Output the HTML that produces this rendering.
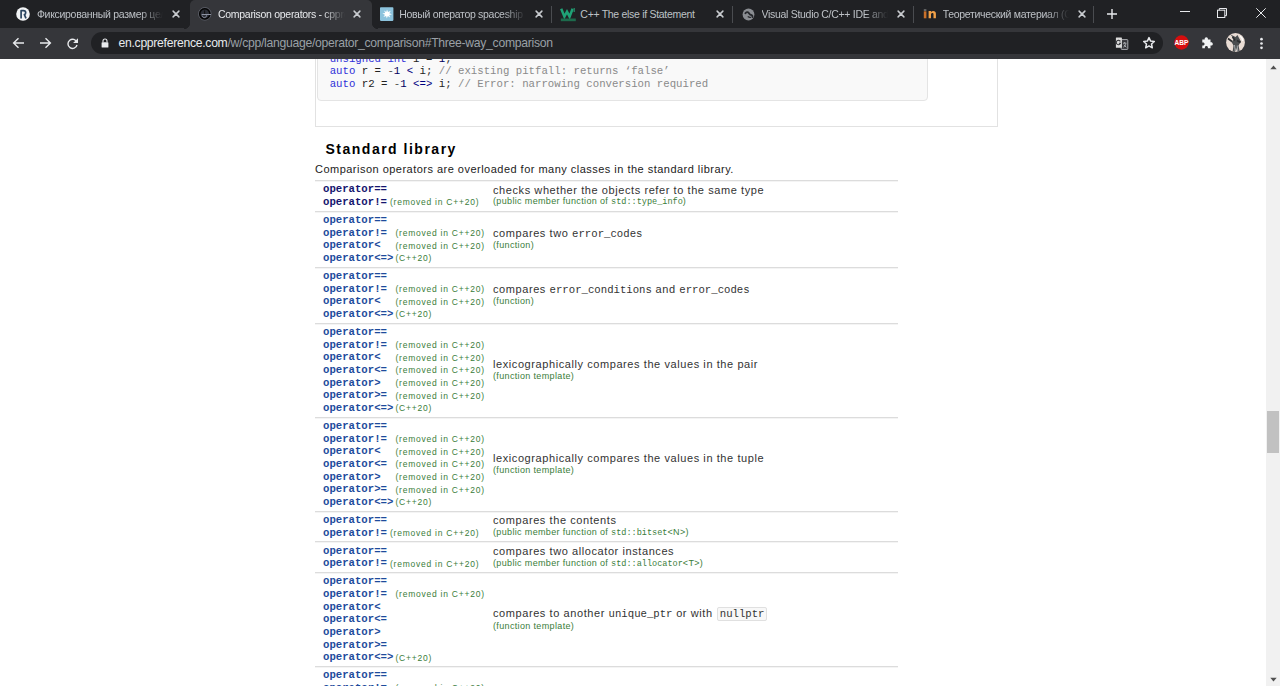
<!DOCTYPE html>
<html><head><meta charset="utf-8"><title>cppreference</title>
<style>
*{box-sizing:border-box}
html,body{margin:0;padding:0}
body{width:1280px;height:686px;overflow:hidden;position:relative;background:#fff;font-family:"Liberation Sans",sans-serif}
.abs{position:absolute}
.ttl{position:absolute;top:7.96px;font-size:10.5px;letter-spacing:-0.3px;line-height:12px;white-space:nowrap;overflow:hidden}
.ttl.fade{-webkit-mask-image:linear-gradient(to right,#000 82%,transparent 100%);mask-image:linear-gradient(to right,#000 82%,transparent 100%)}
.cls{position:absolute;top:10px;width:8px;height:8px;line-height:0}
.cls svg,.favi svg{display:block}
.favi{position:absolute;line-height:0}
.sep{position:absolute;top:6px;width:1px;height:16.5px;background:#4a4c50}
.code{position:absolute;left:329.7px;font-family:"Liberation Mono",monospace;font-size:10.7px;line-height:12.8px;white-space:pre;color:#222}
.kw{color:#3030d8}.sy1{color:#000080}.sy2{color:#505050}.sy4{color:#303030}.nu{color:#000060}.co{color:#8a8a8a}.eq{color:#222}
.hl{position:absolute;left:315px;width:583.4px;height:2px;border-top:1px solid #dcdcdc;border-bottom:1px solid #f4f4f4}
.ops{position:absolute;left:323px;font-family:"Liberation Mono",monospace;font-weight:bold;font-size:10.67px;line-height:12.667px;white-space:pre}
.mk{position:absolute;font-family:"Liberation Sans",sans-serif;font-size:8.5px;line-height:12.667px;color:#3a7d3a;letter-spacing:0.76px;white-space:pre}
.desc{position:absolute;left:493px;white-space:pre;color:#222}
.d1{font-size:11px;letter-spacing:0.58px;line-height:13px;color:#333}
.d2{font-size:9px;letter-spacing:0.35px;line-height:11px;color:#3a7d3a}
.dm{font-family:"Liberation Mono",monospace;letter-spacing:0;font-size:10.67px}
.m2{font-family:"Liberation Mono",monospace;letter-spacing:0;font-size:8.55px}
.nul{font-family:"Liberation Mono",monospace;letter-spacing:0;font-size:10.67px;background:#f8f8f8;border:1px solid #e0e0e0;border-radius:2px;padding:0 1.5px;margin-left:1px}
</style></head>
<body>
<div class="abs" style="left:315px;top:20px;width:682.5px;height:107px;border:1px solid #e2e2e2;border-top:none"></div>
<div class="abs" style="left:317.4px;top:20px;width:610.2px;height:80.6px;background:#f9f9f9;border:1px solid #e4e4e4;border-radius:4px"></div>
<div class="code" style="top:52.86px"><span class="kw">unsigned</span> <span class="kw">int</span> i <span class="eq">=</span> <span class="nu">1</span><span class="sy4">;</span></div>
<div class="code" style="top:65.06px"><span class="kw">auto</span> r <span class="eq">=</span> <span class="sy2">-</span><span class="nu">1</span> <span class="sy1">&lt;</span> i<span class="sy4">;</span> <span class="co">// existing pitfall: returns ‘false’</span></div>
<div class="code" style="top:77.96px"><span class="kw">auto</span> r2 <span class="eq">=</span> <span class="sy2">-</span><span class="nu">1</span> <span class="sy1">&lt;=&gt;</span> i<span class="sy4">;</span> <span class="co">// Error: narrowing conversion required</span></div>
<div class="abs" style="left:325.5px;top:141.15px;font-weight:bold;font-size:14px;line-height:16px;letter-spacing:1.5px;color:#000;white-space:pre">Standard library</div>
<div class="abs" style="left:315px;top:162.69px;font-size:11px;line-height:13px;letter-spacing:0.48px;color:#222;white-space:pre">Comparison operators are overloaded for many classes in the standard library.</div>
<div class="hl" style="top:180px"></div>
<div class="ops" style="top:183.32px;color:#14146e">operator==</div>
<div class="ops" style="top:195.99px;color:#14146e">operator!=</div>
<div class="mk" style="left:390px;top:196.39px">(removed in C++20)</div>
<div class="desc d1" style="top:183.59px">checks whether the objects refer to the same type</div>
<div class="desc d2" style="top:196.18px">(public member function of <span class="m2">std::type_info</span>)</div>
<div class="hl" style="top:211px"></div>
<div class="ops" style="top:213.99px;color:#1d4b9c">operator==</div>
<div class="ops" style="top:226.66px;color:#1d4b9c">operator!=</div>
<div class="mk" style="left:395.5px;top:227.06px">(removed in C++20)</div>
<div class="ops" style="top:239.32px;color:#1d4b9c">operator&lt;</div>
<div class="mk" style="left:395.5px;top:239.72px">(removed in C++20)</div>
<div class="ops" style="top:251.99px;color:#1d4b9c">operator&lt;=&gt;</div>
<div class="mk" style="left:395.5px;top:252.39px">(C++20)</div>
<div class="desc d1" style="top:226.92px">compares two <span class="dm">error_codes</span></div>
<div class="desc d2" style="top:239.52px">(function)</div>
<div class="hl" style="top:267px"></div>
<div class="ops" style="top:269.99px;color:#1d4b9c">operator==</div>
<div class="ops" style="top:282.66px;color:#1d4b9c">operator!=</div>
<div class="mk" style="left:395.5px;top:283.06px">(removed in C++20)</div>
<div class="ops" style="top:295.32px;color:#1d4b9c">operator&lt;</div>
<div class="mk" style="left:395.5px;top:295.72px">(removed in C++20)</div>
<div class="ops" style="top:307.99px;color:#1d4b9c">operator&lt;=&gt;</div>
<div class="mk" style="left:395.5px;top:308.39px">(C++20)</div>
<div class="desc d1" style="top:282.92px">compares <span class="dm">error_conditions</span> and <span class="dm">error_codes</span></div>
<div class="desc d2" style="top:295.52px">(function)</div>
<div class="hl" style="top:323px"></div>
<div class="ops" style="top:325.99px;color:#1d4b9c">operator==</div>
<div class="ops" style="top:338.66px;color:#1d4b9c">operator!=</div>
<div class="mk" style="left:395.5px;top:339.06px">(removed in C++20)</div>
<div class="ops" style="top:351.33px;color:#1d4b9c">operator&lt;</div>
<div class="mk" style="left:395.5px;top:351.72px">(removed in C++20)</div>
<div class="ops" style="top:363.99px;color:#1d4b9c">operator&lt;=</div>
<div class="mk" style="left:395.5px;top:364.39px">(removed in C++20)</div>
<div class="ops" style="top:376.66px;color:#1d4b9c">operator&gt;</div>
<div class="mk" style="left:395.5px;top:377.06px">(removed in C++20)</div>
<div class="ops" style="top:389.33px;color:#1d4b9c">operator&gt;=</div>
<div class="mk" style="left:395.5px;top:389.73px">(removed in C++20)</div>
<div class="ops" style="top:401.99px;color:#1d4b9c">operator&lt;=&gt;</div>
<div class="mk" style="left:395.5px;top:402.39px">(C++20)</div>
<div class="desc d1" style="top:357.92px">lexicographically compares the values in the pair</div>
<div class="desc d2" style="top:370.52px">(function template)</div>
<div class="hl" style="top:417px"></div>
<div class="ops" style="top:419.99px;color:#1d4b9c">operator==</div>
<div class="ops" style="top:432.66px;color:#1d4b9c">operator!=</div>
<div class="mk" style="left:395.5px;top:433.06px">(removed in C++20)</div>
<div class="ops" style="top:445.33px;color:#1d4b9c">operator&lt;</div>
<div class="mk" style="left:395.5px;top:445.73px">(removed in C++20)</div>
<div class="ops" style="top:457.99px;color:#1d4b9c">operator&lt;=</div>
<div class="mk" style="left:395.5px;top:458.39px">(removed in C++20)</div>
<div class="ops" style="top:470.66px;color:#1d4b9c">operator&gt;</div>
<div class="mk" style="left:395.5px;top:471.06px">(removed in C++20)</div>
<div class="ops" style="top:483.33px;color:#1d4b9c">operator&gt;=</div>
<div class="mk" style="left:395.5px;top:483.73px">(removed in C++20)</div>
<div class="ops" style="top:496.00px;color:#1d4b9c">operator&lt;=&gt;</div>
<div class="mk" style="left:395.5px;top:496.39px">(C++20)</div>
<div class="desc d1" style="top:451.93px">lexicographically compares the values in the tuple</div>
<div class="desc d2" style="top:464.52px">(function template)</div>
<div class="hl" style="top:511px"></div>
<div class="ops" style="top:514.00px;color:#1d4b9c">operator==</div>
<div class="ops" style="top:526.66px;color:#1d4b9c">operator!=</div>
<div class="mk" style="left:390px;top:527.06px">(removed in C++20)</div>
<div class="desc d1" style="top:514.26px">compares the contents</div>
<div class="desc d2" style="top:526.85px">(public member function of <span class="m2">std::bitset</span>&lt;N&gt;)</div>
<div class="hl" style="top:541px"></div>
<div class="ops" style="top:544.66px;color:#1d4b9c">operator==</div>
<div class="ops" style="top:557.33px;color:#1d4b9c">operator!=</div>
<div class="mk" style="left:390px;top:557.73px">(removed in C++20)</div>
<div class="desc d1" style="top:544.93px">compares two allocator instances</div>
<div class="desc d2" style="top:557.52px">(public member function of <span class="m2">std::allocator</span>&lt;T&gt;)</div>
<div class="hl" style="top:572px"></div>
<div class="ops" style="top:575.33px;color:#1d4b9c">operator==</div>
<div class="ops" style="top:588.00px;color:#1d4b9c">operator!=</div>
<div class="mk" style="left:395.5px;top:588.40px">(removed in C++20)</div>
<div class="ops" style="top:600.66px;color:#1d4b9c">operator&lt;</div>
<div class="ops" style="top:613.33px;color:#1d4b9c">operator&lt;=</div>
<div class="ops" style="top:626.00px;color:#1d4b9c">operator&gt;</div>
<div class="ops" style="top:638.66px;color:#1d4b9c">operator&gt;=</div>
<div class="ops" style="top:651.33px;color:#1d4b9c">operator&lt;=&gt;</div>
<div class="mk" style="left:395.5px;top:651.73px">(C++20)</div>
<div class="desc d1" style="top:607.26px">compares to another <span class="dm">unique_ptr</span> or with <span class="nul">nullptr</span></div>
<div class="desc d2" style="top:621.36px">(function template)</div>
<div class="hl" style="top:666px"></div>
<div class="ops" style="top:669.33px;color:#1d4b9c">operator==</div>
<div class="ops" style="top:682.00px;color:#1d4b9c">operator!=</div>
<div class="mk" style="left:395.5px;top:682.40px">(removed in C++20)</div>

<div class="abs" style="left:1266px;top:58.5px;width:14px;height:627.5px;background:#f1f1f1"></div>
<div class="abs" style="left:1267px;top:410.6px;width:11.8px;height:42.3px;background:#c1c1c1"></div>
<svg class="abs" style="left:1268.5px;top:64px" width="9" height="6" viewBox="0 0 9 6"><path d="M1.3 5.3L4.5 1.6 7.7 5.3z" fill="#505050"/></svg>
<svg class="abs" style="left:1268.5px;top:676.5px" width="9" height="6" viewBox="0 0 9 6"><path d="M1.3 0.8L4.5 4.5 7.7 0.8z" fill="#505050"/></svg>

<div class="abs" style="left:0;top:0;width:1280px;height:28px;background:#202124"></div>
<div class="abs" style="left:0;top:28px;width:1280px;height:30.5px;background:#35363a"></div>
<div class="abs" style="left:189.5px;top:0px;width:182px;height:28.5px;background:#35363a;border-radius:5px 5px 0 0"></div>
<div class="abs" style="left:183.5px;top:22.5px;width:6px;height:6px;background:radial-gradient(circle at 0 0,#202124 5.9px,#35363a 6.3px)"></div>
<div class="abs" style="left:371.5px;top:22.5px;width:6px;height:6px;background:radial-gradient(circle at 100% 0,#202124 5.9px,#35363a 6.3px)"></div>
<div class="ttl fade" style="left:36.90px;width:126.50px;color:#bdc1c6">Фиксированный размер целого</div>
<div class="cls" style="left:172.30px;top:9.8px"><svg width="8" height="8" viewBox="0 0 8 8"><path d="M1.1 1.1L6.9 6.9M6.9 1.1L1.1 6.9" stroke="#c8cbcf" stroke-width="1.5" stroke-linecap="round"/></svg></div>
<div class="favi" style="left:17.40px;top:8px"><svg style="margin-left:-1.4px;margin-top:-1.1px" width="14" height="14" viewBox="0 0 14 14"><circle cx="7" cy="7" r="6.8" fill="#f2f4f6"/><path d="M5.1 11.4V3.6h2.3c1.5 0 2.3.8 2.3 2.1 0 1-.5 1.7-1.3 1.9l1.6 3.8" stroke="#2b4560" stroke-width="1.7" fill="none" stroke-linejoin="round"/></svg></div>
<div class="ttl fade" style="left:218.05px;width:126.50px;color:#e8eaed">Comparison operators - cppreference.com</div>
<div class="cls" style="left:353.45px;top:9.8px"><svg width="8" height="8" viewBox="0 0 8 8"><path d="M1.1 1.1L6.9 6.9M6.9 1.1L1.1 6.9" stroke="#c8cbcf" stroke-width="1.5" stroke-linecap="round"/></svg></div>
<div class="favi" style="left:198.55px;top:8px"><svg style="margin-left:-1px;margin-top:-0.6px" width="14" height="14" viewBox="0 0 14 14"><circle cx="6.8" cy="6.8" r="6.3" fill="none" stroke="#5d616b" stroke-width="0.9"/><circle cx="6.8" cy="6.8" r="5.1" fill="#2b2e36" stroke="#050505" stroke-width="1.5"/><path d="M3.6 7.5h9.4" stroke="#8d93a3" stroke-width="1"/><path d="M4.2 8.6c.3 1.3 1.2 2 2.3 2s1.9-.9 2-2.2" stroke="#8d93a3" stroke-width="1" fill="none"/><path d="M6.6 3.4v3.6" stroke="#111" stroke-width="1"/></svg></div>
<div class="ttl fade" style="left:399.20px;width:126.50px;color:#bdc1c6">Новый оператор spaceship (космический корабль)</div>
<div class="cls" style="left:534.60px;top:9.8px"><svg width="8" height="8" viewBox="0 0 8 8"><path d="M1.1 1.1L6.9 6.9M6.9 1.1L1.1 6.9" stroke="#c8cbcf" stroke-width="1.5" stroke-linecap="round"/></svg></div>
<div class="favi" style="left:379.70px;top:8px"><svg style="margin-left:0px;margin-top:-1px" width="14" height="14" viewBox="0 0 14 14"><rect x="0" y="0.2" width="13.4" height="13.7" rx="0.8" fill="#8cc3dd"/><path d="M7 2.6L8 5 10.8 3.8 9.3 6.2 12 7.2 9.2 7.9 10.2 10.6 7.8 9.1 6.8 11.6 6.1 9 3.4 10 5 7.7 2.3 6.6 5.2 6 4.1 3.4 6.3 5z" fill="#fff"/><circle cx="7" cy="7" r="2.2" fill="#fff"/></svg></div>
<div class="ttl" style="left:580.35px;width:126.50px;color:#bdc1c6">C++ The else if Statement</div>
<div class="cls" style="left:715.75px;top:9.8px"><svg width="8" height="8" viewBox="0 0 8 8"><path d="M1.1 1.1L6.9 6.9M6.9 1.1L1.1 6.9" stroke="#c8cbcf" stroke-width="1.5" stroke-linecap="round"/></svg></div>
<div class="favi" style="left:560.85px;top:8px"><svg style="margin-left:-1.2px;margin-top:-0.5px" width="17" height="14" viewBox="0 0 17 14"><path d="M1.2 0.8L4.4 8.6 7 3.6 9.6 8.6 12.6 0.8" stroke="#1fa276" stroke-width="2.5" fill="none" stroke-linejoin="miter"/><rect x="13.4" y="0" width="1.6" height="4" fill="#247a5c"/><rect x="0.8" y="10.5" width="15" height="2.7" fill="#1d6a4c"/></svg></div>
<div class="ttl fade" style="left:761.50px;width:126.50px;color:#bdc1c6">Visual Studio C/C++ IDE and Compiler for Windows</div>
<div class="cls" style="left:896.90px;top:9.8px"><svg width="8" height="8" viewBox="0 0 8 8"><path d="M1.1 1.1L6.9 6.9M6.9 1.1L1.1 6.9" stroke="#c8cbcf" stroke-width="1.5" stroke-linecap="round"/></svg></div>
<div class="favi" style="left:742.00px;top:8px"><svg style="margin-left:-0.3px;margin-top:-0.1px" width="13" height="13" viewBox="0 0 13 13"><circle cx="6.5" cy="6.5" r="5.9" fill="#8a8d92"/><path d="M3.4 5.2c.9-1.3 2.4-1.5 3.2-.4.7 1 1.3 2 2.6 2.2 1 .2 1.4.9 1.3 2" stroke="#26282c" stroke-width="1.9" fill="none" stroke-linecap="round"/><path d="M6.2 8.8c.6.4 1.4.6 2.2.5" stroke="#26282c" stroke-width="1.3" fill="none" stroke-linecap="round"/></svg></div>
<div class="ttl fade" style="left:942.65px;width:126.50px;color:#bdc1c6">Теоретический материал (С++)</div>
<div class="cls" style="left:1078.05px;top:9.8px"><svg width="8" height="8" viewBox="0 0 8 8"><path d="M1.1 1.1L6.9 6.9M6.9 1.1L1.1 6.9" stroke="#c8cbcf" stroke-width="1.5" stroke-linecap="round"/></svg></div>
<div class="favi" style="left:923.15px;top:8px"><svg style="margin-left:-1px;margin-top:-2.3px" width="15" height="13" viewBox="0 0 15 13"><rect x="1.8" y="3.4" width="2.6" height="1.3" fill="#8a8a8a"/><rect x="1.8" y="5.3" width="2.6" height="7" fill="#c8702a"/><path d="M6.6 12.3V5.1h2.4v1c.5-.8 1.3-1.2 2.3-1.2 1.6 0 2.6 1 2.6 2.8v4.6h-2.4V8.3c0-.8-.4-1.2-1.1-1.2-.8 0-1.4.6-1.4 1.5v3.7z" fill="#f0a048"/></svg></div>
<div class="sep" style="left:551.00px"></div>
<div class="sep" style="left:732.30px"></div>
<div class="sep" style="left:912.90px"></div>
<div class="sep" style="left:1093.30px"></div>
<svg class="abs" style="left:1106px;top:8px" width="12" height="12" viewBox="0 0 12 12"><path d="M6 1v10M1 6h10" stroke="#e8eaed" stroke-width="1.4"/></svg>
<div class="abs" style="left:1180px;top:11px;width:10px;height:1px;background:#e8eaed"></div>
<svg class="abs" style="left:1216px;top:7px" width="12" height="12" viewBox="0 0 12 12"><rect x="1.5" y="3.2" width="7.3" height="7.3" fill="none" stroke="#e8eaed" stroke-width="1"/><path d="M3.3 3.2V1.5h7.2v7.2H8.8" fill="none" stroke="#e8eaed" stroke-width="1"/></svg>
<svg class="abs" style="left:1255px;top:7px" width="12" height="12" viewBox="0 0 12 12"><path d="M1.3 1.3L10.7 10.7M10.7 1.3L1.3 10.7" stroke="#e8eaed" stroke-width="1"/></svg>

<svg class="abs" style="left:12px;top:37px" width="13" height="12" viewBox="0 0 13 12"><path d="M12 6H1.8M6.5 1.2L1.6 6 6.5 10.8" stroke="#e8eaed" stroke-width="1.4" fill="none"/></svg>
<svg class="abs" style="left:38.5px;top:37px" width="13" height="12" viewBox="0 0 13 12"><path d="M1 6h10.2M6.5 1.2L11.4 6 6.5 10.8" stroke="#e8eaed" stroke-width="1.4" fill="none"/></svg>
<svg class="abs" style="left:65.5px;top:36.5px" width="13" height="13" viewBox="0 0 13 13"><path d="M10.9 5.3A4.6 4.6 0 1 0 11 8" stroke="#e8eaed" stroke-width="1.4" fill="none"/><path d="M12 1.2v4.9H7.1z" fill="#e8eaed"/></svg>
<div class="abs" style="left:91px;top:31.6px;width:1072px;height:22.3px;background:#202124;border-radius:11.2px"></div>
<svg class="abs" style="left:101px;top:37.5px" width="8" height="10" viewBox="0 0 8 10"><path d="M2 4.3V3a2 2 0 0 1 4 0v1.3" stroke="#e8eaed" stroke-width="1.1" fill="none"/><rect x="0.6" y="4.3" width="6.8" height="5.2" rx="0.6" fill="#e8eaed"/></svg>
<div class="abs" style="left:118.5px;top:35.97px;font-size:12.2px;letter-spacing:-0.29px;line-height:14px;color:#9aa0a6;white-space:pre"><span style="color:#e8eaed">en.cppreference.com</span>/w/cpp/language/operator_comparison#Three-way_comparison</div>
<svg class="abs" style="left:1115px;top:36.5px" width="14" height="13" viewBox="0 0 14 13"><rect x="6.2" y="2.6" width="6.6" height="9.8" rx="0.6" fill="#35363a" stroke="#a8abaf" stroke-width="1"/><path d="M8 6.2h3.4M9.7 5v1.2M8.4 10.2c1.4-.8 2.2-2 2.4-3.6M9 7.6c.5 1.2 1.4 2 2.4 2.6" stroke="#b8bbbf" stroke-width="0.9" fill="none"/><rect x="0.9" y="0.5" width="6" height="10.2" rx="0.5" fill="#dcdcdc"/><path d="M5.4 4.4A2.2 2.2 0 1 0 5.6 6.2H3.9" stroke="#35363a" stroke-width="1.1" fill="none"/></svg>
<svg class="abs" style="left:1141.5px;top:36px" width="14" height="14" viewBox="0 0 14 14"><path d="M7 1.6L8.6 5.1 12.3 5.5 9.5 8 10.3 11.8 7 9.9 3.7 11.8 4.5 8 1.7 5.5 5.4 5.1z" stroke="#e8eaed" stroke-width="1.5" fill="none" stroke-linejoin="round"/></svg>
<svg class="abs" style="left:1174px;top:35px" width="15" height="15" viewBox="0 0 15 15"><circle cx="7.5" cy="7.5" r="7.2" fill="#d60e0e"/><text x="7.5" y="10" text-anchor="middle" font-family="Liberation Sans" font-weight="bold" font-size="6.6" fill="#fff">ABP</text></svg>
<svg class="abs" style="left:1201.5px;top:36px" width="13" height="13" viewBox="0 0 13 13"><path d="M4.3 1.2c1 0 1.6.8 1.6 1.7v.7h2.6v2.6h.6c.9 0 1.7.7 1.7 1.7s-.8 1.7-1.7 1.7h-.6v2.6H5.9v-.9c0-.8-.7-1.4-1.5-1.4s-1.5.6-1.5 1.4v.9H.3V9.4h.8c.8 0 1.5-.7 1.5-1.5S1.9 6.4 1.1 6.4H.3V3.6h2.4v-.7c0-.9.6-1.7 1.6-1.7z" fill="#f1f3f4"/></svg>
<svg class="abs" style="left:1225.8px;top:33.4px" width="19" height="19" viewBox="0 0 19 19"><defs><clipPath id="av"><circle cx="9.5" cy="9.5" r="9.4"/></clipPath></defs><circle cx="9.5" cy="9.5" r="9.4" fill="#e9dcd4"/><g clip-path="url(#av)"><path d="M4.5 1.5l3.5 4.5-2.5 3 2 3.5-1 7h2.5l1-5 1.5 5h2.5l-1.5-7 2.5-4-2-3.5-1.5-3-2 2z" fill="#4a4d4f"/><path d="M2 5.5l4 3M6.5 4l2.5 3.5M11 7.5l3.5 2" stroke="#2a2c2e" stroke-width="1.6"/><path d="M8.5 12l.7 6M11.2 12.5l.6 6" stroke="#9ea3a6" stroke-width="1.1"/><path d="M14 3c1.5 1 2.5 3 2.8 5" stroke="#fff" stroke-width="1.4" fill="none"/></g></svg>
<svg class="abs" style="left:1259px;top:36.5px" width="5" height="13" viewBox="0 0 5 13"><circle cx="2.5" cy="2.2" r="1.35" fill="#e8eaed"/><circle cx="2.5" cy="6.5" r="1.35" fill="#e8eaed"/><circle cx="2.5" cy="10.8" r="1.35" fill="#e8eaed"/></svg>

</body></html>
